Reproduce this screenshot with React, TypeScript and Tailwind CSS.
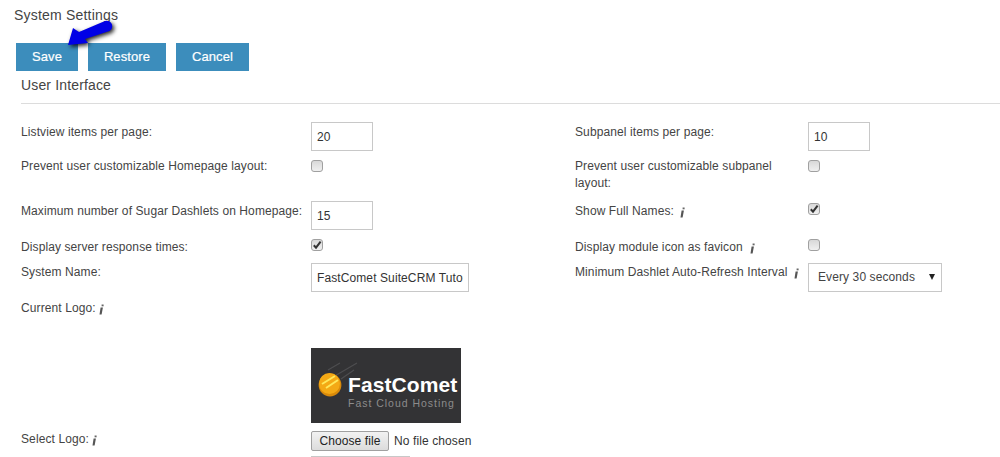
import React from 'react';

const InfoIcon = () => (
  <svg width="5" height="11" viewBox="0 0 5 11" className="inline-block shrink-0">
    <rect x="2.6" y="0.5" width="2" height="1.8" fill="#666" />
    <path d="M1.6 3.6 H3.9 L2.6 10.6 H0.5 Z" fill="#555" />
  </svg>
);

const Checkbox = ({ checked = false }: { checked?: boolean }) => (
  <span className="relative block w-[12px] h-[12px] rounded-[3px] border border-[#a0a0a0] bg-gradient-to-b from-[#d8d8d8] to-[#f0f0f0]">
    {checked && (
      <svg width="10" height="10" viewBox="0 0 10 10" className="absolute left-0 top-0">
        <path d="M1.8 5.2 L4 7.6 L8.6 1.6" fill="none" stroke="#333" strokeWidth="2" />
      </svg>
    )}
  </span>
);

const TextField = ({ value, width }: { value: string; width: string }) => (
  <input
    readOnly
    value={value}
    className={`${width} h-[29px] border border-[#c8c8c8] bg-white pl-[5px] pr-[5px] text-[12px] tracking-[0.1px] text-[#333] outline-none`}
  />
);

const Label = ({ children, info }: { children: React.ReactNode; info?: string }) => (
  <div className="leading-[17px]">
    {children}
    {info && (
      <span className={`${info} inline-block align-[-1px]`}>
        <InfoIcon />
      </span>
    )}
  </div>
);

const FastCometLogo = () => (
  <svg width="150" height="75" viewBox="0 0 150 75" className="block">
    <rect width="150" height="75" fill="#333335" />
    <path d="M17 22 L29 15 M22 29 L46 15 M30 31 L43 22" stroke="#4d4d4f" strokeWidth="1.2" />
    <circle cx="19" cy="37" r="11.4" fill="#d98a0a" />
    <circle cx="18.5" cy="35.5" r="10.5" fill="#f4a915" />
    <path d="M11 36 L24 28 M15 40 L27 32" stroke="#ffe85a" strokeWidth="2" />
    <text x="37" y="44" fontFamily="'Liberation Sans', sans-serif" fontWeight="700" fontSize="21" fill="#fff">
      FastComet
    </text>
    <text x="37" y="58.5" fontFamily="'Liberation Sans', sans-serif" fontSize="10.5" fill="#8c8c8c" textLength="106" lengthAdjust="spacing">
      Fast Cloud Hosting
    </text>
  </svg>
);

const ActionButton = ({ label, width }: { label: string; width: string }) => (
  <button className={`${width} h-[28px] bg-[#3c8dbc] text-white text-[13px] font-normal [-webkit-text-stroke:0.2px_#fff]`}>{label}</button>
);

export default function App() {
  return (
    <div className="relative w-[1000px] h-[457px] overflow-hidden bg-white text-[12px] tracking-[0.1px] text-[#444] font-['Liberation_Sans',Arial,sans-serif]">
      <div className="pl-[14px] pt-[7px] text-[14px] tracking-[0.2px] leading-[16px]">System Settings</div>

      <div className="flex gap-[10px] pl-[16px] mt-[20px]">
        <ActionButton label="Save" width="w-[62px]" />
        <ActionButton label="Restore" width="w-[78px]" />
        <ActionButton label="Cancel" width="w-[73px]" />
      </div>

      <div className="pl-[21px] pt-[6px] text-[14px] tracking-[0.15px] leading-[17px] h-[32px]">User Interface</div>
      <div className="ml-[21px] border-t border-[#dcdcdc]" />

      <div className="grid grid-cols-[290px_264px_233px_1fr] pl-[21px] mt-[18px]">
        <div className="h-[33px] pt-[2px]"><Label>Listview items per page:</Label></div>
        <div><TextField value="20" width="w-[62px]" /></div>
        <div className="pt-[2px]"><Label>Subpanel items per page:</Label></div>
        <div><TextField value="10" width="w-[62px]" /></div>

        <div className="h-[46px] pt-[3px]"><Label>Prevent user customizable Homepage layout:</Label></div>
        <div className="pt-[5px]"><Checkbox /></div>
        <div className="pt-[3px] pr-[20px]"><Label>Prevent user customizable subpanel layout:</Label></div>
        <div className="pt-[5px]"><Checkbox /></div>

        <div className="h-[38px] pt-[2px]"><Label>Maximum number of Sugar Dashlets on Homepage:</Label></div>
        <div><TextField value="15" width="w-[62px]" /></div>
        <div className="pt-[2px]"><Label info="ml-[6px]">Show Full Names:</Label></div>
        <div className="pt-[2px]"><Checkbox checked /></div>

        <div className="h-[24px]"><Label>Display server response times:</Label></div>
        <div><Checkbox checked /></div>
        <div><Label info="ml-[7px]">Display module icon as favicon</Label></div>
        <div><Checkbox /></div>

        <div className="h-[36px] pt-[1px]"><Label>System Name:</Label></div>
        <div><TextField value="FastComet SuiteCRM Tutorial" width="w-[158px]" /></div>
        <div className="pt-[1px]"><Label info="ml-[7px]">Minimum Dashlet Auto-Refresh Interval</Label></div>
        <div className="relative w-[134px] h-[29px] border border-[#c8c8c8] bg-white pl-[9px] leading-[27px]">
          Every 30 seconds
          <span className="absolute right-[6px] top-[10px] w-0 h-0 border-x-[3.5px] border-x-transparent border-t-[6px] border-t-[#222]" />
        </div>

        <div className="h-[49px] pt-[1px]"><Label info="ml-[3px]">Current Logo:</Label></div>
        <div className="col-span-3" />

        <div className="h-[76px]" />
        <div className="col-span-3"><FastCometLogo /></div>

        <div className="h-[25px] pt-[6px] mt-[1px]"><Label info="ml-[3px]">Select Logo:</Label></div>
        <div className="col-span-3 flex items-center h-[20px] mt-[7px]">
          <span className="h-[20px] w-[78px] flex items-center justify-center rounded-[2px] border border-[#a0a0a0] bg-gradient-to-b from-[#f2f2f2] to-[#dcdcdc] text-[12px] text-[#222]">
            Choose file
          </span>
          <span className="ml-[5px] text-[#333]">No file chosen</span>
        </div>

        <div />
        <div className="col-span-3 w-[99px] h-[10px] mt-[5px] border border-[#c8c8c8] bg-white" />
      </div>

      {/* annotation arrow over the Save button */}
      <svg width="64" height="40" viewBox="0 0 64 40" className="absolute left-[60px] top-[15px] drop-shadow-[2px_2px_2px_rgba(0,0,0,0.85)]">
        <path d="M8 30 L13 13 L19 17 L45 6 Q50 5 52 9.5 Q53 13.5 49.5 16 L25 24 L28 28 Z" fill="#0000e6" />
      </svg>
    </div>
  );
}
